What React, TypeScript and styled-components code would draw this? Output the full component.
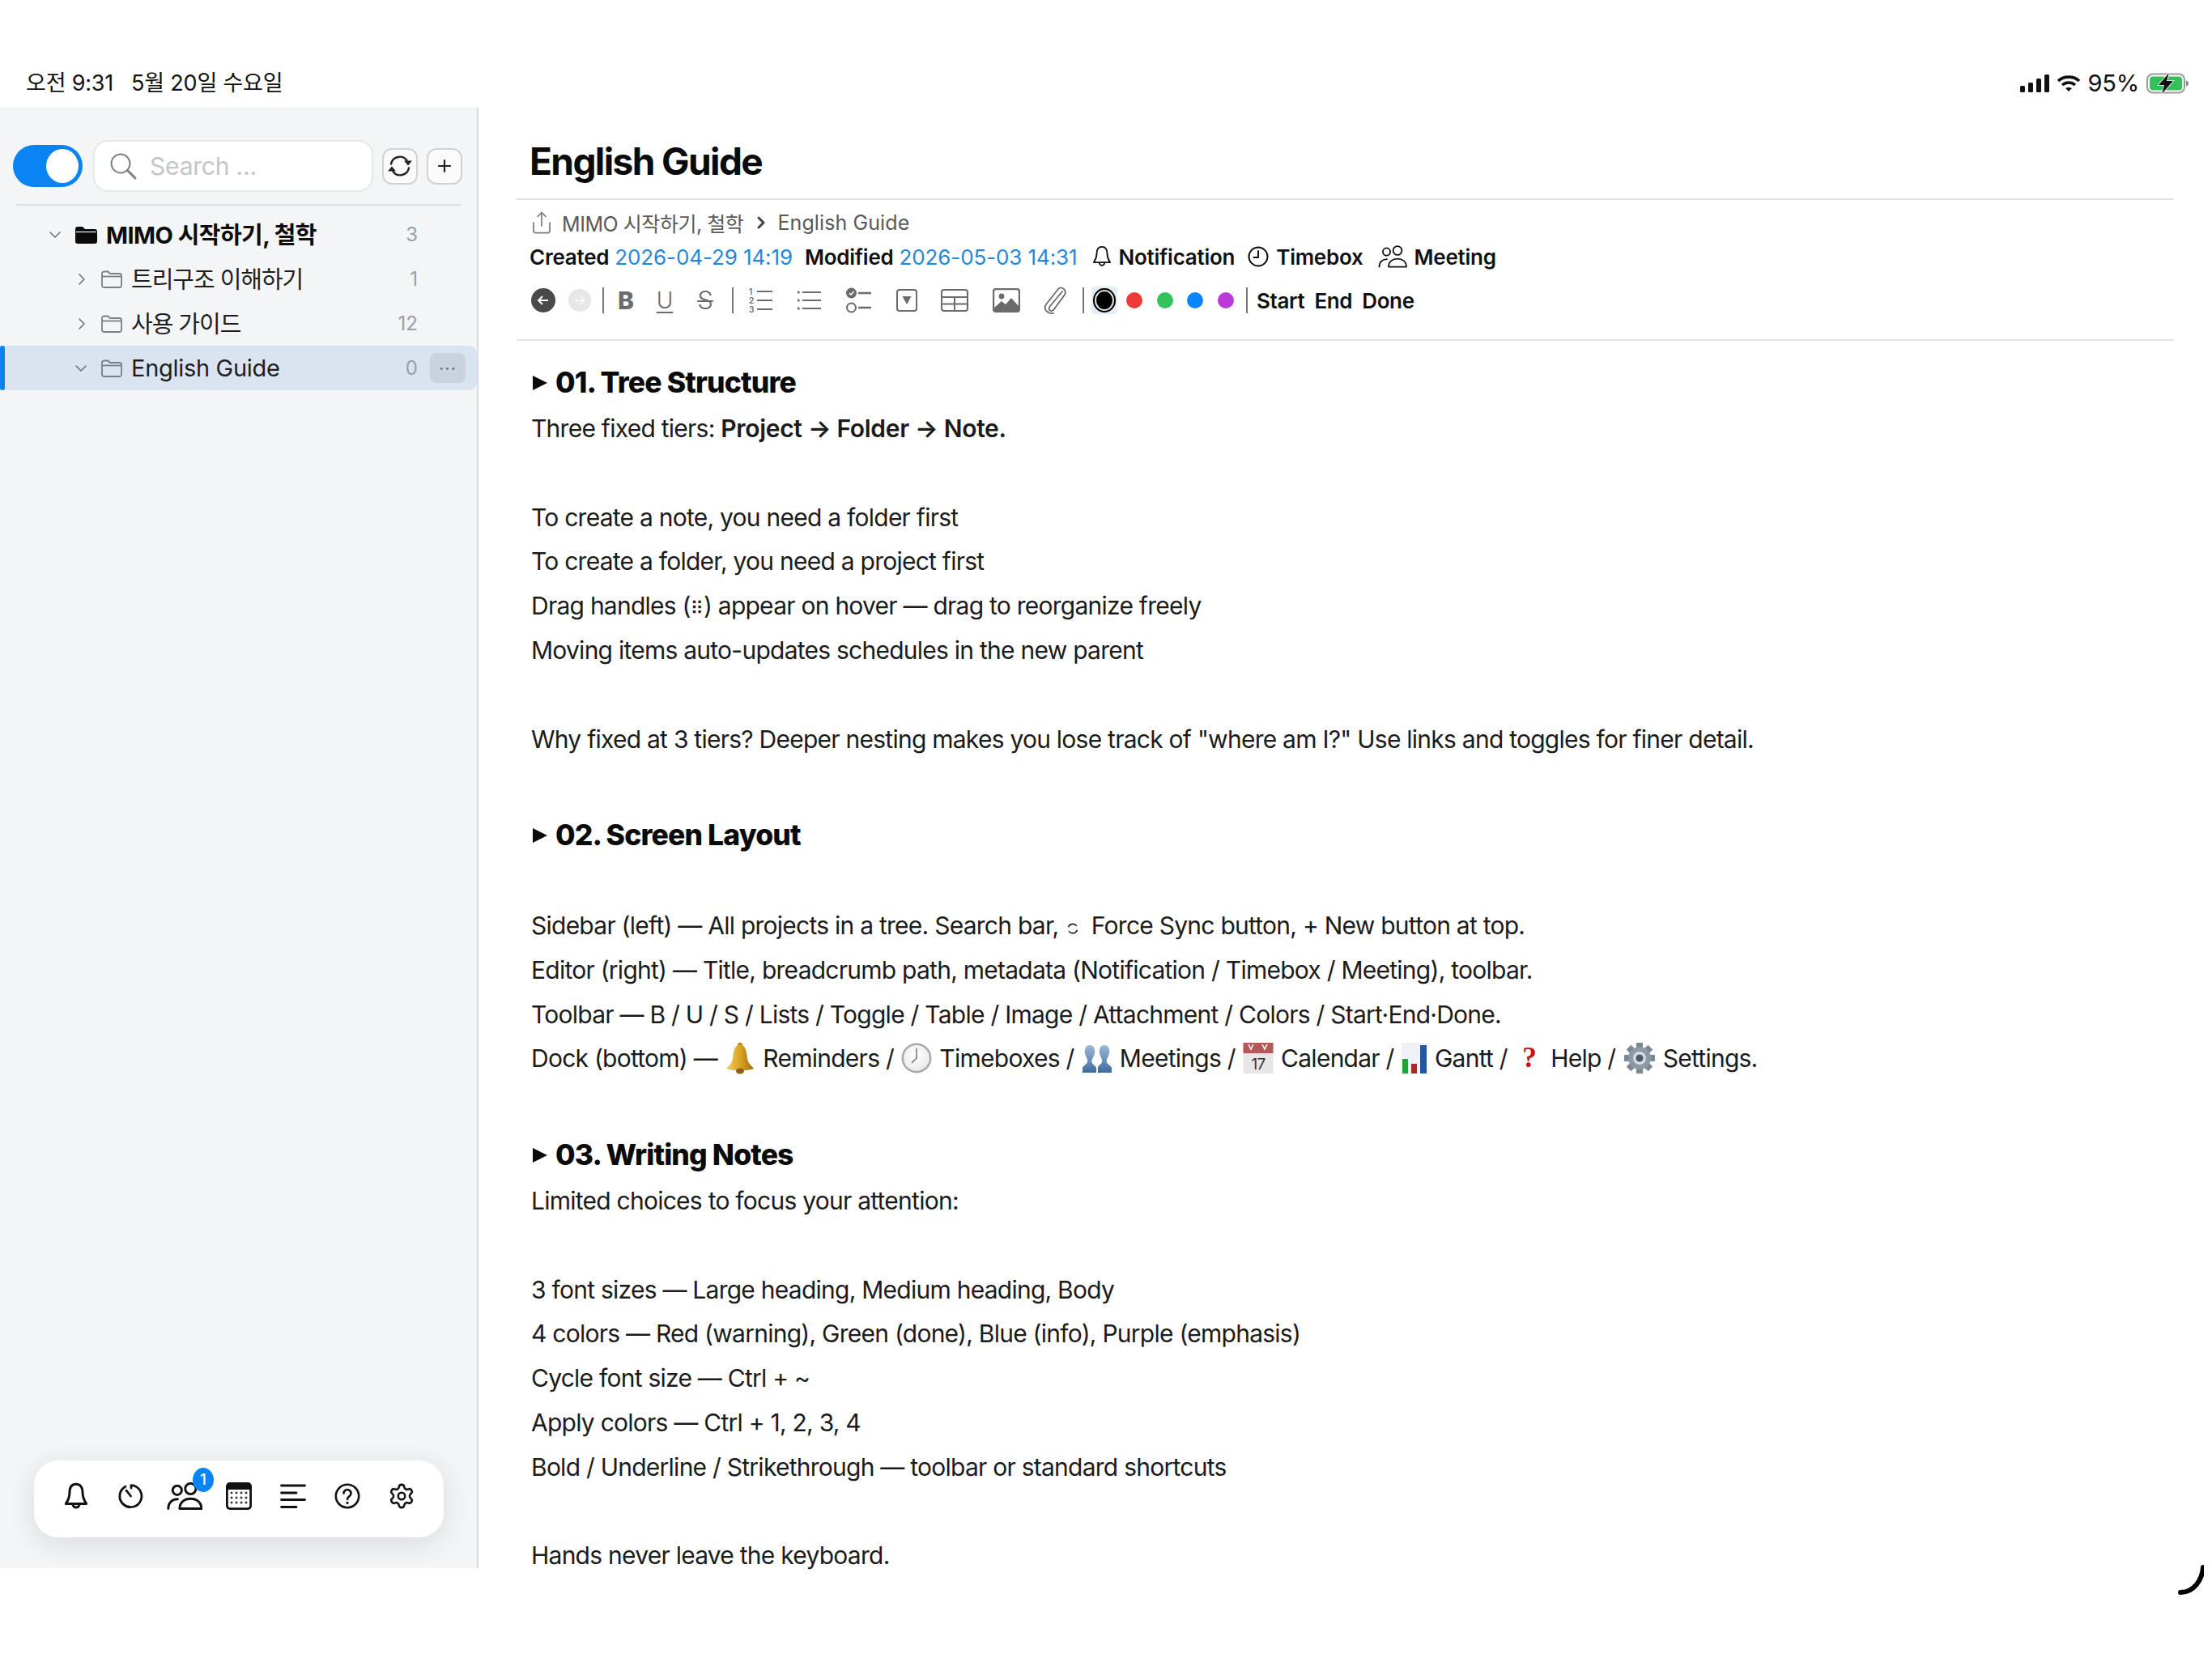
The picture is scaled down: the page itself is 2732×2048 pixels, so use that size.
import React from "react";
import styled, { createGlobalStyle } from "styled-components";
import { ChevronDown, ChevronRight, Plus, Share } from "lucide-react";

const FONT = `Inter, "Noto Sans CJK KR", "DejaVu Sans", sans-serif`;

const Global = createGlobalStyle`
  html, body { margin: 0; padding: 0; background: #fff; }
  body { width: 2732px; height: 2048px; font-family: ${FONT}; color: #1b1b1b; }
  * { box-sizing: border-box; }
`;

// status bar
const Page = styled.div`
  width: 2732px;
  height: 2048px;
  position: relative;
  background: #fff;
`;
const StatusBar = styled.div`
  height: 133px;
  padding: 84px 29px 11px 32px;
  display: flex;
  align-items: center;
  justify-content: space-between;
  font-size: 27px;
  letter-spacing: -0.2px;
  line-height: 38px;
  color: #111;
`;
const StatusLeft = styled.div`
  display: flex;
  gap: 22px;
`;
const StatusRight = styled.div`
  display: flex;
  align-items: center;
  gap: 9px;
  font-size: 29px;
`;

// shell
const Shell = styled.div`
  display: flex;
  height: 1804px;
`;
const Sidebar = styled.aside`
  width: 591px;
  flex: none;
  position: relative;
  background: #f3f5f7;
  border-right: 2px solid #d9dbde;
`;
const SearchRow = styled.div`
  display: flex;
  align-items: center;
  padding: 40px 0 0 16px;
`;
const Toggle = styled.div`
  width: 86px;
  height: 52px;
  border-radius: 26px;
  background: #0b84f3;
  padding: 5px 5px 5px 41px;
  flex: none;
`;
const Knob = styled.div`
  width: 40px;
  height: 42px;
  border-radius: 50%;
  background: #fff;
`;
const SearchBox = styled.div`
  width: 346px;
  height: 64px;
  margin-left: 13px;
  display: flex;
  align-items: center;
  gap: 15px;
  padding-left: 17px;
  background: #fff;
  border: 2px solid #e6e8ea;
  border-radius: 18px;
  color: #c3c5c8;
  font-size: 30px;
  letter-spacing: -0.2px;
`;
const SquareBtn = styled.div`
  width: 44px;
  height: 45px;
  margin-left: 11px;
  display: flex;
  align-items: center;
  justify-content: center;
  background: #fbfbfc;
  border: 2px solid #cfd2d6;
  border-radius: 12px;
  color: #222;
`;
const SideRule = styled.div`
  height: 2px;
  margin: 15px 19px 0 20px;
  background: #dcdee1;
`;
const Tree = styled.div`
  margin-top: 8px;
`;
const Row = styled.div<{ $active?: boolean; $pad: number }>`
  height: 55px;
  display: flex;
  align-items: center;
  position: relative;
  padding: 0 14px 0 ${(p) => p.$pad}px;
  background: ${(p) => (p.$active ? "#dae4f0" : "transparent")};
  border-radius: ${(p) => (p.$active ? "0 10px 10px 0" : "0")};
  &::before {
    content: "";
    display: ${(p) => (p.$active ? "block" : "none")};
    position: absolute;
    left: 0;
    top: 0;
    bottom: 0;
    width: 6px;
    border-radius: 3px;
    background: #0b84f3;
  }
`;
const Chevron = styled.span`
  width: 24px;
  display: flex;
  justify-content: center;
  color: #6a6d70;
  flex: none;
`;
const FolderSlot = styled.span<{ $ml: number }>`
  margin-left: ${(p) => p.$ml}px;
  display: flex;
  flex: none;
`;
const RowName = styled.span<{ $bold?: boolean; $cjk?: boolean; $ml: number }>`
  margin-left: ${(p) => p.$ml}px;
  padding-bottom: ${(p) => (p.$cjk ? 3 : 0)}px;
  font-size: 29px;
  font-weight: ${(p) => (p.$bold ? 700 : 400)};
  letter-spacing: ${(p) => (p.$bold ? -0.55 : p.$cjk ? -1.05 : -0.3)}px;
  color: ${(p) => (p.$bold ? "#0d0d0d" : "#1e1e1e")};
  flex: 1;
  white-space: nowrap;
`;
const Count = styled.span`
  font-size: 24px;
  color: #9b9ea1;
  margin-right: 15px;
`;
const MoreSlot = styled.span<{ $show?: boolean }>`
  width: 44px;
  height: 37px;
  flex: none;
  border-radius: 8px;
  background: ${(p) => (p.$show ? "#c9d3e0" : "transparent")};
  display: flex;
  align-items: center;
  justify-content: center;
  color: #6d7278;
  font-size: 22px;
  letter-spacing: 1px;
  line-height: 20px;
`;

// dock
const Dock = styled.div`
  position: absolute;
  left: 42px;
  bottom: 38px;
  width: 506px;
  height: 95px;
  padding: 0 0 7px 18px;
  display: flex;
  align-items: center;
  background: #fff;
  border-radius: 30px;
  box-shadow: 0 8px 34px rgba(30, 40, 50, 0.12);
`;
const DockItem = styled.div`
  width: 67px;
  display: flex;
  justify-content: center;
  position: relative;
  color: #111;
`;
const Badge = styled.span`
  position: absolute;
  left: 44px;
  top: -18px;
  width: 26px;
  height: 30px;
  border-radius: 50%;
  background: #0b84f3;
  color: #fff;
  font-size: 19px;
  font-weight: 500;
  display: flex;
  align-items: center;
  justify-content: center;
`;

// editor
const Main = styled.main`
  flex: 1;
  padding: 0 47px 0 47px;
`;
const Title = styled.h1`
  margin: 0;
  padding: 39px 0 19px 16px;
  font-size: 46px;
  line-height: 54px;
  font-weight: 700;
  letter-spacing: -1.6px;
  color: #0b0b0b;
`;
const Rule = styled.div`
  height: 2px;
  background: #e2e3e5;
`;
const Crumbs = styled.div`
  height: 40px;
  margin-top: 8px;
  padding-left: 16px;
  display: flex;
  align-items: center;
  font-size: 25px;
  color: #595959;
  white-space: nowrap;
`;
const CrumbText = styled.span<{ $track: number }>`
  letter-spacing: ${(p) => p.$track}px;
`;
const CrumbSep = styled.span`
  display: flex;
  margin: 0 8px 0 10px;
  color: #444;
`;
const CrumbIcon = styled.span`
  display: flex;
  margin-right: 10px;
  color: #7d7d7d;
`;
const Meta = styled.div`
  height: 40px;
  margin-top: 2px;
  padding-left: 16px;
  display: flex;
  align-items: center;
  font-size: 26px;
  letter-spacing: -0.1px;
  white-space: nowrap;
`;
const MetaLabel = styled.span<{ $ml?: number }>`
  font-weight: 600;
  letter-spacing: -0.25px;
  color: #111;
  margin-left: ${(p) => p.$ml ?? 0}px;
`;
const MetaDate = styled.span`
  color: #1f88d9;
  margin-left: 7px;
`;
const MetaIcon = styled.span<{ $ml: number }>`
  display: flex;
  margin: 0 9px 0 ${(p) => p.$ml}px;
  color: #111;
`;
const Toolbar = styled.div`
  height: 40px;
  margin: 14px 0 28px;
  padding-left: 18px;
  display: flex;
  align-items: center;
`;
const Tool = styled.span<{ $w: number; $ml: number }>`
  width: ${(p) => p.$w}px;
  margin-left: ${(p) => p.$ml}px;
  flex: none;
  display: flex;
  align-items: center;
  justify-content: center;
  color: #6b6b6b;
`;
const Sep = styled.span<{ $ml: number }>`
  width: 2px;
  height: 32px;
  margin-left: ${(p) => p.$ml}px;
  flex: none;
  background: #777;
`;
const RoundNav = styled.span<{ $off?: boolean; $size: number; $ml: number }>`
  width: ${(p) => p.$size}px;
  height: ${(p) => p.$size}px;
  margin-left: ${(p) => p.$ml}px;
  border-radius: 50%;
  flex: none;
  display: flex;
  align-items: center;
  justify-content: center;
  background: ${(p) => (p.$off ? "#e7e7e7" : "#4a4a4a")};
  color: ${(p) => (p.$off ? "#f7f7f7" : "#fff")};
`;
const FormatLetter = styled.span<{ $bold?: boolean; $under?: boolean; $strike?: boolean }>`
  font-size: ${(p) => (p.$strike ? 31 : p.$bold ? 30 : 28)}px;
  line-height: 32px;
  font-weight: ${(p) => (p.$bold ? 800 : 300)};
  text-decoration: ${(p) => (p.$under ? "underline" : p.$strike ? "line-through" : "none")};
  text-decoration-thickness: 2px;
  text-underline-offset: 4px;
  color: #6b6b6b;
`;
const SelectedColor = styled.span`
  width: 32px;
  height: 34px;
  margin-left: 9px;
  flex: none;
  border-radius: 4px;
  background: #e3eefa;
  display: flex;
  align-items: center;
  justify-content: center;
`;
const Ring = styled.span`
  width: 28px;
  height: 30px;
  border-radius: 50%;
  background: #000;
  box-shadow: inset 0 0 0 2px #000, inset 0 0 0 4px #ddd;
`;
const Dot = styled.span<{ $color: string; $ml: number }>`
  width: 20px;
  height: 20px;
  margin-left: ${(p) => p.$ml}px;
  border-radius: 50%;
  flex: none;
  background: ${(p) => p.$color};
`;
const StateLabel = styled.span<{ $ml: number }>`
  margin-left: ${(p) => p.$ml}px;
  font-size: 26px;
  font-weight: 600;
  letter-spacing: -0.35px;
  color: #111;
`;
const Body = styled.div`
  padding: 13px 0 0 18px;
`;
const Heading = styled.h2`
  margin: 8px 0 0;
  height: 58px;
  padding-top: 4px;
  font-size: 35.5px;
  line-height: 54px;
  font-weight: 800;
  letter-spacing: -0.85px;
  color: #0b0b0b;
  display: flex;
  align-items: center;
  gap: 10px;
  white-space: nowrap;
`;
const Tri = styled.span`
  width: 0;
  height: 0;
  flex: none;
  margin-left: 2px;
  border-left: 18px solid #0b0b0b;
  border-top: 9px solid transparent;
  border-bottom: 9px solid transparent;
`;
const Para = styled.p`
  margin: 0;
  height: 54.8px;
  font-size: 30px;
  line-height: 59px;
  letter-spacing: -0.75px;
  color: #1b1b1b;
  white-space: nowrap;
`;
const Strong = styled.b`
  font-weight: 600;
  letter-spacing: -0.3px;
`;
const Handles = styled.span`
  font-size: 22px;
  letter-spacing: 0;
`;
const SmallSync = styled.span`
  display: inline-flex;
  vertical-align: -2px;
  margin: 0 6px 0 1px;
`;
const EmojiBox = styled.span`
  display: inline-flex;
  vertical-align: -9px;
  margin: 0 1.5px;
`;
const EmojiHelp = styled.span`
  font-family: "Liberation Serif", serif;
  font-weight: 700;
  font-size: 36px;
  line-height: 30px;
  color: #c8141c;
  display: inline-block;
  width: 32px;
  text-align: center;
  margin: 0 3px;
`;
const Spinner = styled.svg`
  position: absolute;
  left: 2682px;
  top: 1926px;
`;

// icons
const Svg = ({ s, children, w }: { s: number; w?: number; children: React.ReactNode }) => (
  <svg width={w ?? s} height={s} viewBox={`0 0 ${w ?? s} ${s}`} fill="none" stroke="currentColor" strokeLinecap="round" strokeLinejoin="round">
    {children}
  </svg>
);

const SignalIcon = () => (
  <svg width="36" height="22" viewBox="0 0 36 22" fill="#111">
    <rect x="0" y="14" width="6" height="8" rx="1.5" />
    <rect x="10" y="10" width="6" height="12" rx="1.5" />
    <rect x="20" y="5" width="6" height="17" rx="1.5" />
    <rect x="30" y="0" width="6" height="22" rx="1.5" />
  </svg>
);
const WifiIcon = () => (
  <svg width="30" height="22" viewBox="0 0 30 22" fill="none" stroke="#111" strokeWidth="3.6" strokeLinecap="butt">
    <path d="M2 8 C9 1.5 21 1.5 28 8" />
    <path d="M7 13 C11.5 9 18.5 9 23 13" />
    <path d="M15 21 l-4 -4 C13 15.5 17 15.5 19 17 Z" fill="#111" stroke="none" />
  </svg>
);
const BatteryIcon = () => (
  <svg width="52" height="26" viewBox="0 0 52 26">
    <rect x="1" y="1.5" width="46" height="23" rx="7" fill="none" stroke="#9a9a9a" strokeWidth="2" />
    <rect x="4" y="4.5" width="40" height="17" rx="4" fill="#35c15a" />
    <path d="M49 9.5 q3 1 3 3.5 t-3 3.5 Z" fill="#8a8a8a" />
    <path d="M28 0 L15 15 H22 L19 26 L33 10 H25 Z" fill="#111" stroke="#fff" strokeWidth="1.6" paintOrder="stroke" />
  </svg>
);
const SearchIcon = () => (
  <svg width="36" height="36" viewBox="0 0 36 36" fill="none" stroke="#7d8084" strokeLinecap="round">
    <circle cx="15" cy="15" r="11.5" strokeWidth="2" />
    <path d="M23.500 23.500 L33 33" strokeWidth="3" />
  </svg>
);
const SyncIcon = () => (
  <Svg s={32}>
    <path d="M5 13.500 A11 11 0 0 1 24.500 9" strokeWidth="2.4" />
    <path d="M27 18.500 A11 11 0 0 1 7.500 23" strokeWidth="2.4" />
    <path d="M21 9.500 H31 L26 15.500 Z" fill="currentColor" stroke="none" />
    <path d="M1 22.500 H11 L6 16.500 Z" fill="currentColor" stroke="none" />
  </Svg>
);
const FolderFill = () => (
  <svg width="27" height="22" viewBox="0 0 27 22">
    <path d="M0 4 a3 3 0 0 1 3 -3 h6 l3 3 h12 a3 3 0 0 1 3 3 v12 a3 3 0 0 1 -3 3 H3 a3 3 0 0 1 -3 -3 Z" fill="#0b0b0b" />
    <path d="M1 7.5 H26" stroke="#f3f5f7" strokeWidth="1.2" />
  </svg>
);
const FolderLine = () => (
  <svg width="26" height="22" viewBox="0 0 26 22" fill="none" stroke="#7b7e82" strokeWidth="1.8">
    <path d="M1 4 a2.5 2.5 0 0 1 2.5 -2.5 h5 l2.5 2.5 h11.5 a2.5 2.5 0 0 1 2.5 2.5 v12 a2.5 2.5 0 0 1 -2.5 2.5 H3.5 a2.5 2.5 0 0 1 -2.5 -2.5 Z" />
    <path d="M1 7.5 H25" />
  </svg>
);
const BellIcon = ({ s = 26, sw = 2 }: { s?: number; sw?: number }) => (
  <svg width={s} height={s * 1.15} viewBox="0 0 26 30" fill="none" stroke="currentColor" strokeWidth={sw} strokeLinejoin="round">
    <path d="M13 2 C8 2 6 6 6 11 C6 17 4 20 2 23 H24 C22 20 20 17 20 11 C20 6 18 2 13 2 Z" />
    <path d="M9.5 23.5 a3.5 3.5 0 0 0 7 0" />
  </svg>
);
const ClockIcon = () => (
  <Svg s={26}>
    <circle cx="13" cy="13" r="11.5" strokeWidth="2" />
    <path d="M13 6 V14 H7.5" strokeWidth="2" />
  </Svg>
);
const PeopleIcon = ({ s = 36, sw = 2 }: { s?: number; sw?: number }) => (
  <svg width={s} height={s * 0.78} viewBox="0 0 36 28" fill="none" stroke="currentColor" strokeWidth={sw} strokeLinecap="round" strokeLinejoin="round">
    <circle cx="10.5" cy="8" r="4.6" />
    <circle cx="24" cy="6.5" r="5.4" />
    <path d="M1.5 26.5 C1.5 20 6 17 11 17" />
    <path d="M13 26.5 C13 20 18 16.5 24 16.5 C30 16.5 35 20 35 26.5 Z" />
  </svg>
);
const OrderedIcon = () => (
  <svg width="30" height="32" viewBox="0 0 30 32" fill="none" stroke="currentColor" strokeWidth="2.2">
    <path d="M10 5 H29 M10 16 H29 M10 27 H29" />
    <text x="0" y="9" fontSize="10" fill="currentColor" stroke="none" fontFamily="Inter, sans-serif" fontWeight="600">1</text>
    <text x="0" y="20" fontSize="10" fill="currentColor" stroke="none" fontFamily="Inter, sans-serif" fontWeight="600">2</text>
    <text x="0" y="31" fontSize="10" fill="currentColor" stroke="none" fontFamily="Inter, sans-serif" fontWeight="600">3</text>
  </svg>
);
const BulletIcon = () => (
  <svg width="30" height="26" viewBox="0 0 30 26" fill="none" stroke="currentColor" strokeWidth="2.2">
    <path d="M6 3 H29 M6 13 H29 M6 23 H29" />
    <path d="M0 3 H2.5 M0 13 H2.5 M0 23 H2.5" strokeWidth="3" />
  </svg>
);
const CheckIcon = () => (
  <svg width="32" height="32" viewBox="0 0 32 32" fill="none" stroke="currentColor" strokeWidth="2">
    <circle cx="6.5" cy="7" r="5.5" fill="currentColor" />
    <path d="M4 7 l2 2 l3.5 -4" stroke="#fff" strokeWidth="1.6" />
    <circle cx="6.5" cy="25" r="5.5" />
    <path d="M15 7 H31 M15 25 H31" strokeWidth="2.4" />
  </svg>
);
const ToggleIcon = () => (
  <svg width="26" height="32" viewBox="0 0 26 32" fill="none" stroke="currentColor" strokeWidth="2">
    <rect x="1" y="3" width="24" height="26" rx="3" />
    <path d="M7.5 11 H18.5 L13 21 Z" fill="currentColor" stroke="none" />
  </svg>
);
const TableIcon = () => (
  <svg width="34" height="28" viewBox="0 0 34 28" fill="none" stroke="currentColor" strokeWidth="2">
    <rect x="1" y="1" width="32" height="26" rx="3" />
    <path d="M1 10 H33 M1 18.5 H33 M17 10 V27" />
  </svg>
);
const ImageIcon = () => (
  <svg width="34" height="30" viewBox="0 0 34 30">
    <rect x="1" y="1" width="32" height="28" rx="3" fill="#fff" stroke="currentColor" strokeWidth="2.4" />
    <circle cx="11" cy="10" r="3.4" fill="currentColor" />
    <path d="M2 24 L11 16 L16 20 L23 12 L32 22 V28 H2 Z" fill="currentColor" />
  </svg>
);
const ClipIcon = () => (
  <svg width="28" height="34" viewBox="0 0 28 34" fill="none" stroke="currentColor" strokeWidth="1.8" strokeLinecap="round">
    <path d="M23 6 L8 24 C5 28 8 32 12 29 L26 10 C29 4 22 -1 18 3 L3 22 C-1 28 5 34 12 33" />
  </svg>
);
const TimerIcon = () => (
  <Svg s={32}>
    <path d="M10 4.2 A13.5 13.5 0 1 0 17 2.6 V6" strokeWidth="2.8" />
    <path d="M11 9 L16.5 16" strokeWidth="2.8" />
  </Svg>
);
const CalendarIcon = () => (
  <svg width="32" height="34" viewBox="0 0 32 34">
    <rect x="1.4" y="1.4" width="29.2" height="31.2" rx="3.5" fill="#fff" stroke="#111" strokeWidth="2.8" />
    <path d="M1.4 5 a3.5 3.5 0 0 1 3.5 -3.5 H27 a3.5 3.5 0 0 1 3.5 3.5 V9 H1.4 Z" fill="#111" />
    {[13, 19, 25].map((y) =>
      [7, 13, 19, 25].map((x) => <rect key={`${x}-${y}`} x={x - 1.3} y={y - 1.3} width="2.6" height="2.6" fill="#333" />)
    )}
  </svg>
);
const LinesIcon = () => (
  <svg width="32" height="32" viewBox="0 0 32 32" fill="none" stroke="#111" strokeWidth="2.8" strokeLinecap="round">
    <path d="M1.5 3 H30.5 M1.5 12 H20 M1.5 20.5 H30.5 M1.5 29.5 H20" />
  </svg>
);
const HelpIcon = () => (
  <Svg s={32}>
    <circle cx="16" cy="16" r="14.2" strokeWidth="2.6" />
    <path d="M11.5 12.5 a4.5 4.5 0 1 1 6.8 3.9 C16.8 17.4 16 18.2 16 20" strokeWidth="2.6" />
    <circle cx="16" cy="24.4" r="1.6" fill="currentColor" stroke="none" />
  </Svg>
);
const GearIcon = () => (
  <svg width="34" height="36" viewBox="0 0 24 24" fill="none" stroke="#111" strokeWidth="1.8" strokeLinecap="round" strokeLinejoin="round">
    <path d="M9.671 4.136a2.34 2.34 0 0 1 4.659 0 2.34 2.34 0 0 0 3.319 1.915 2.34 2.34 0 0 1 2.33 4.033 2.34 2.34 0 0 0 0 3.831 2.34 2.34 0 0 1-2.33 4.033 2.34 2.34 0 0 0-3.319 1.915 2.34 2.34 0 0 1-4.659 0 2.34 2.34 0 0 0-3.32-1.915 2.34 2.34 0 0 1-2.33-4.033 2.34 2.34 0 0 0 0-3.831A2.34 2.34 0 0 1 6.35 6.051a2.34 2.34 0 0 0 3.319-1.915" />
    <circle cx="12" cy="12" r="3" />
  </svg>
);

// old style emoji used in the note body
const EBell = () => (
  <svg width="38" height="40" viewBox="0 0 38 40">
    <defs>
      <linearGradient id="eb" x1="0" y1="0" x2="1" y2="0">
        <stop offset="0" stopColor="#f2cf62" />
        <stop offset="0.55" stopColor="#d69f1c" />
        <stop offset="1" stopColor="#9c6c10" />
      </linearGradient>
    </defs>
    <circle cx="19" cy="4" r="3" fill="#a97a14" />
    <path d="M19 3 C12 4 11 12 10 20 C9 27 5 29 2 33 C8 36 30 36 36 33 C33 29 29 27 28 20 C27 12 26 4 19 3 Z" fill="url(#eb)" />
    <ellipse cx="19" cy="36" rx="5" ry="3.6" fill="#8c6010" />
  </svg>
);
const EClock = () => (
  <svg width="38" height="40" viewBox="0 0 38 40">
    <defs>
      <radialGradient id="ec" cx="0.45" cy="0.4" r="0.7">
        <stop offset="0" stopColor="#ffffff" />
        <stop offset="0.8" stopColor="#ececec" />
        <stop offset="1" stopColor="#b5b5b5" />
      </radialGradient>
    </defs>
    <circle cx="19" cy="20" r="18.5" fill="#a8a8a8" />
    <circle cx="19" cy="20" r="16" fill="url(#ec)" />
    <path d="M19 8 V20 L13 26" stroke="#777" strokeWidth="1.6" fill="none" />
  </svg>
);
const EBusts = () => (
  <svg width="38" height="40" viewBox="0 0 38 40">
    <defs>
      <linearGradient id="eu" x1="0" y1="0" x2="0" y2="1">
        <stop offset="0" stopColor="#9db9d6" />
        <stop offset="1" stopColor="#3f6c9c" />
      </linearGradient>
    </defs>
    <path d="M10 4 C5 4 3 9 4 14 C5 19 8 21 7 25 C6 28 2 29 1 32 V38 H18 V32 C17 29 13 28 12.500 25 C12 21 15 19 16 14 C17 9 15 4 10 4 Z" fill="url(#eu)" />
    <path d="M28 4 C23 4 21 9 22 14 C23 19 26 21 25 25 C24 28 20 29 20 32 V38 H37 V32 C36 29 32 28 31 25 C30 21 33 19 34 14 C35 9 33 4 28 4 Z" fill="url(#eu)" />
  </svg>
);
const ECal = () => (
  <svg width="38" height="40" viewBox="0 0 38 40">
    <rect x="0.500" y="1" width="37" height="38" fill="#e6e6e6" />
    <rect x="0.500" y="1" width="37" height="13" fill="#b25a5a" />
    <path d="M7 3 l3 6 l3 -6 M24 3 l3 6 l3 -6" stroke="#fff" strokeWidth="1.6" fill="none" />
    <text x="19" y="34" textAnchor="middle" fontSize="19" fill="#333" fontFamily="Inter, sans-serif">17</text>
  </svg>
);
const EChart = () => (
  <svg width="32" height="40" viewBox="0 0 32 40">
    <rect x="0" y="1" width="32" height="38" fill="#eef1f5" />
    <rect x="1" y="21" width="7" height="18" fill="#25a33a" />
    <rect x="12" y="27" width="7" height="12" fill="#b72222" />
    <rect x="23" y="4" width="8" height="35" fill="#2456a8" />
  </svg>
);
const EGear = () => (
  <svg width="40" height="40" viewBox="0 0 40 40">
    <g fill="#7c8794">
      {[0, 45, 90, 135, 180, 225, 270, 315].map((a) => (
        <rect key={a} x="16" y="1" width="8" height="10" transform={`rotate(${a} 20 20)`} />
      ))}
    </g>
    <circle cx="20" cy="20" r="14" fill="#8e99a6" />
    <circle cx="20" cy="20" r="8" fill="#d6dbe1" />
    <circle cx="20" cy="20" r="4.5" fill="#4e5967" />
  </svg>
);
const Emoji = ({ children }: { children: React.ReactNode }) => <EmojiBox>{children}</EmojiBox>;

const App = () => (
  <Page>
    <Global />
    <StatusBar>
      <StatusLeft>
        <span>오전 9:31</span>
        <span>5월 20일 수요일</span>
      </StatusLeft>
      <StatusRight>
        <SignalIcon />
        <WifiIcon />
        <span>95%</span>
        <BatteryIcon />
      </StatusRight>
    </StatusBar>
    <Shell>
      <Sidebar>
        <SearchRow>
          <Toggle>
            <Knob />
          </Toggle>
          <SearchBox>
            <SearchIcon />
            <span>Search ...</span>
          </SearchBox>
          <SquareBtn>
            <SyncIcon />
          </SquareBtn>
          <SquareBtn>
            <Plus size={24} strokeWidth={2.2} />
          </SquareBtn>
        </SearchRow>
        <SideRule />
        <Tree>
          <Row $pad={56}>
            <Chevron>
              <ChevronDown size={28} strokeWidth={1.5} />
            </Chevron>
            <FolderSlot $ml={13}>
              <FolderFill />
            </FolderSlot>
            <RowName $bold $cjk $ml={11}>MIMO 시작하기, 철학</RowName>
            <Count>3</Count>
            <MoreSlot />
          </Row>
          <Row $pad={89}>
            <Chevron>
              <ChevronRight size={28} strokeWidth={1.5} />
            </Chevron>
            <FolderSlot $ml={12}>
              <FolderLine />
            </FolderSlot>
            <RowName $cjk $ml={11}>트리구조 이해하기</RowName>
            <Count>1</Count>
            <MoreSlot />
          </Row>
          <Row $pad={89}>
            <Chevron>
              <ChevronRight size={28} strokeWidth={1.5} />
            </Chevron>
            <FolderSlot $ml={12}>
              <FolderLine />
            </FolderSlot>
            <RowName $cjk $ml={11}>사용 가이드</RowName>
            <Count>12</Count>
            <MoreSlot />
          </Row>
          <Row $pad={88} $active>
            <Chevron>
              <ChevronDown size={28} strokeWidth={1.5} />
            </Chevron>
            <FolderSlot $ml={13}>
              <FolderLine />
            </FolderSlot>
            <RowName $ml={11}>English Guide</RowName>
            <Count>0</Count>
            <MoreSlot $show>···</MoreSlot>
          </Row>
        </Tree>
        <Dock>
          <DockItem>
            <BellIcon s={30} sw={2.6} />
          </DockItem>
          <DockItem>
            <TimerIcon />
          </DockItem>
          <DockItem>
            <PeopleIcon s={44} sw={2.4} />
            <Badge>1</Badge>
          </DockItem>
          <DockItem>
            <CalendarIcon />
          </DockItem>
          <DockItem>
            <LinesIcon />
          </DockItem>
          <DockItem>
            <HelpIcon />
          </DockItem>
          <DockItem>
            <GearIcon />
          </DockItem>
        </Dock>
      </Sidebar>
      <Main>
        <Title>English Guide</Title>
        <Rule />
        <Crumbs>
          <CrumbIcon>
            <Share size={30} strokeWidth={1.4} />
          </CrumbIcon>
          <CrumbText $track={-0.45}>MIMO 시작하기, 철학</CrumbText>
          <CrumbSep>
            <ChevronRight size={24} strokeWidth={3} />
          </CrumbSep>
          <CrumbText $track={0.1}>English Guide</CrumbText>
        </Crumbs>
        <Meta>
          <MetaLabel>Created</MetaLabel>
          <MetaDate>2026-04-29 14:19</MetaDate>
          <MetaLabel $ml={15}>Modified</MetaLabel>
          <MetaDate>2026-05-03 14:31</MetaDate>
          <MetaIcon $ml={18}>
            <BellIcon s={24} sw={2} />
          </MetaIcon>
          <MetaLabel>Notification</MetaLabel>
          <MetaIcon $ml={16}>
            <ClockIcon />
          </MetaIcon>
          <MetaLabel>Timebox</MetaLabel>
          <MetaIcon $ml={18}>
            <PeopleIcon s={36} sw={1.8} />
          </MetaIcon>
          <MetaLabel>Meeting</MetaLabel>
        </Meta>
        <Toolbar>
          <RoundNav $size={30} $ml={0}>
            <svg width="18" height="18" viewBox="0 0 18 18" fill="none" stroke="currentColor" strokeWidth="2"><path d="M15 9 H3 M8 4 L3 9 L8 14" /></svg>
          </RoundNav>
          <RoundNav $off $size={28} $ml={16}>
            <svg width="18" height="18" viewBox="0 0 18 18" fill="none" stroke="currentColor" strokeWidth="2"><path d="M3 9 H15 M10 4 L15 9 L10 14" /></svg>
          </RoundNav>
          <Sep $ml={14} />
          <Tool $w={20} $ml={17}><FormatLetter $bold>B</FormatLetter></Tool>
          <Tool $w={20} $ml={28}><FormatLetter $under>U</FormatLetter></Tool>
          <Tool $w={20} $ml={30}><FormatLetter $strike>S</FormatLetter></Tool>
          <Sep $ml={23} />
          <Tool $w={30} $ml={19}><OrderedIcon /></Tool>
          <Tool $w={30} $ml={30}><BulletIcon /></Tool>
          <Tool $w={32} $ml={30}><CheckIcon /></Tool>
          <Tool $w={26} $ml={30}><ToggleIcon /></Tool>
          <Tool $w={34} $ml={29}><TableIcon /></Tool>
          <Tool $w={34} $ml={30}><ImageIcon /></Tool>
          <Tool $w={28} $ml={29}><ClipIcon /></Tool>
          <Sep $ml={20} />
          <SelectedColor><Ring /></SelectedColor>
          <Dot $color="#f03a3a" $ml={11} />
          <Dot $color="#34c25a" $ml={18} />
          <Dot $color="#0a84ff" $ml={17} />
          <Dot $color="#bb39d8" $ml={18} />
          <Sep $ml={15} />
          <StateLabel $ml={11}>Start</StateLabel>
          <StateLabel $ml={12}>End</StateLabel>
          <StateLabel $ml={12}>Done</StateLabel>
        </Toolbar>
        <Rule />
        <Body>
          <Heading><Tri />01. Tree Structure</Heading>
          <Para>Three fixed tiers: <Strong>Project → Folder → Note.</Strong></Para>
          <Para />
          <Para>To create a note, you need a folder first</Para>
          <Para>To create a folder, you need a project first</Para>
          <Para>Drag handles (<Handles>⠿</Handles>) appear on hover — drag to reorganize freely</Para>
          <Para>Moving items auto-updates schedules in the new parent</Para>
          <Para />
          <Para>Why fixed at 3 tiers? Deeper nesting makes you lose track of "where am I?" Use links and toggles for finer detail.</Para>
          <Para />
          <Heading><Tri />02. Screen Layout</Heading>
          <Para />
          <Para>
            Sidebar (left) — All projects in a tree. Search bar,{" "}
            <SmallSync>
              <svg width="18" height="18" viewBox="0 0 26 26" fill="none" stroke="#222" strokeWidth="2.4"><path d="M5 10.5 A8.7 8.7 0 0 1 20.2 8.5" /><path d="M21 15.5 A8.7 8.7 0 0 1 5.8 17.5" /></svg>
            </SmallSync>{" "}
            Force Sync button, + New button at top.
          </Para>
          <Para>Editor (right) — Title, breadcrumb path, metadata (Notification / Timebox / Meeting), toolbar.</Para>
          <Para>Toolbar — B / U / S / Lists / Toggle / Table / Image / Attachment / Colors / Start·End·Done.</Para>
          <Para>
            Dock (bottom) — <Emoji><EBell /></Emoji> Reminders / <Emoji><EClock /></Emoji> Timeboxes / <Emoji><EBusts /></Emoji> Meetings / <Emoji><ECal /></Emoji> Calendar / <Emoji><EChart /></Emoji> Gantt / <EmojiHelp>?</EmojiHelp> Help / <Emoji><EGear /></Emoji> Settings.
          </Para>
          <Para />
          <Heading><Tri />03. Writing Notes</Heading>
          <Para>Limited choices to focus your attention:</Para>
          <Para />
          <Para>3 font sizes — Large heading, Medium heading, Body</Para>
          <Para>4 colors — Red (warning), Green (done), Blue (info), Purple (emphasis)</Para>
          <Para>Cycle font size — Ctrl + ~</Para>
          <Para>Apply colors — Ctrl + 1, 2, 3, 4</Para>
          <Para>Bold / Underline / Strikethrough — toolbar or standard shortcuts</Para>
          <Para />
          <Para>Hands never leave the keyboard.</Para>
        </Body>
      </Main>
    </Shell>
    <Spinner width="40" height="50" viewBox="0 0 40 50" fill="none" stroke="#000" strokeWidth="6" strokeLinecap="round">
      <path d="M39 10 C38 25 28 41 11 41" />
    </Spinner>
  </Page>
);

export default App;
